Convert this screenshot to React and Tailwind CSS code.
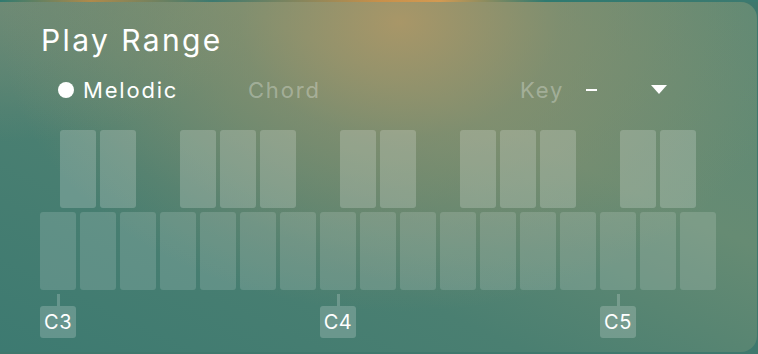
const WHITE = 17;
const BLACK = [1, 1, 0, 1, 1, 1, 0, 1, 1, 0, 1, 1, 1, 0, 1, 1];

export default function App() {
  return (
    <div
      className="w-[758px] h-[354px] overflow-hidden bg-[#3f786d]"
      style={{ fontFamily: "Inter, 'Noto Sans', sans-serif" }}
    >
      <div className="h-[2px] bg-[linear-gradient(90deg,#2f7a70_0%,#b08a4a_12%,#3c7a70_28%,#c8904a_50%,#d39a52_58%,#2f7a70_72%,#3c7a70_100%)]" />
      <div className="w-[757px] h-[350px] rounded-r-[16px] overflow-hidden bg-[radial-gradient(ellipse_400px_290px_at_400px_20px,rgba(172,151,103,0.95)_0%,rgba(150,146,108,0.55)_40%,rgba(120,140,110,0)_100%),radial-gradient(ellipse_260px_140px_at_0px_0px,rgba(112,138,117,0.9)_0%,rgba(112,138,117,0)_100%),linear-gradient(25deg,#3d7a71_0%,#4a7f71_35%,#668b73_65%,#5d8975_100%)]">
        <div className="pl-[41px] pt-[18px] text-[30px] leading-[40px] text-white tracking-[2.4px]">
          Play Range
        </div>

        <div className="flex items-center h-[32px] mt-[14px] text-[22px] tracking-[1.8px]">
          <div className="flex items-center pl-[58px] w-[248px] text-white">
            <span className="w-4 h-4 rounded-full bg-white mr-[9px]" />
            Melodic
          </div>
          <div className="w-[272px] text-white/30">Chord</div>
          <div className="text-white/30">Key</div>
          <div className="ml-[22px] w-[11px] h-[2px] bg-white" />
          <svg className="ml-[54px]" width="16" height="10" viewBox="0 0 16 10">
            <path d="M0 0 H16 L8 9 Z" fill="white" />
          </svg>
        </div>

        <div className="flex flex-col gap-1 mt-[24px]">
          <div className="flex gap-1 pl-[60px]">
            {BLACK.map((b, i) => (
              <div
                key={i}
                className={`w-9 h-[78px] rounded-[3px] ${b ? "bg-white/20" : ""}`}
              />
            ))}
          </div>
          <div className="flex gap-1 pl-10">
            {Array.from({ length: WHITE }).map((_, i) => (
              <div key={i} className="w-9 h-[78px] rounded-[3px] bg-white/15" />
            ))}
          </div>
        </div>

        <div className="flex gap-[244px] pl-10 mt-1">
          {["C3", "C4", "C5"].map((n) => (
            <div key={n} className="flex flex-col items-center w-9">
              <div className="w-[3px] h-3 bg-white/20" />
              <div className="w-9 h-8 rounded-[3px] bg-white/20 flex items-center justify-center text-white text-[20px] tracking-[0.5px]">
                {n}
              </div>
            </div>
          ))}
        </div>
      </div>
    </div>
  );
}
